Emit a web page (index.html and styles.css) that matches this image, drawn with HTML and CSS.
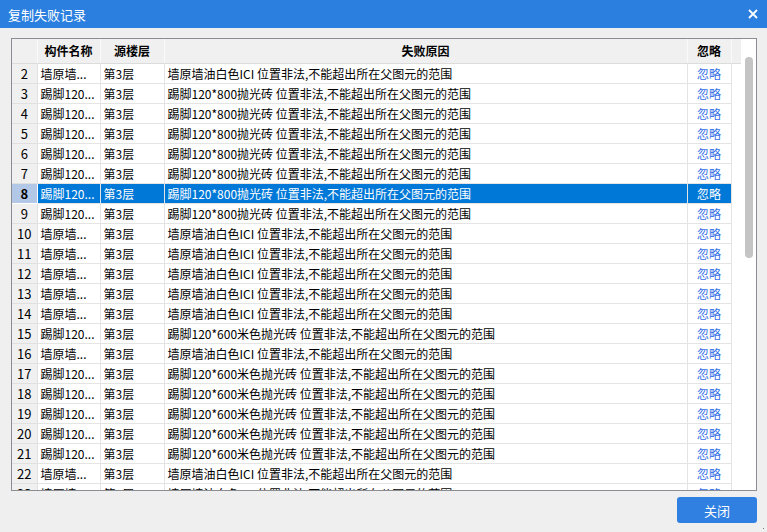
FILE: index.html
```html
<!DOCTYPE html>
<html lang="zh-CN">
<head>
    <meta charset="UTF-8">
    <title>复制失败记录</title>
    <link rel="stylesheet" href="styles.css">
</head>
<body>
    <div class="dialog">
        <div class="titlebar">
            <span class="title">复制失败记录</span>
            <svg class="close-x" width="10" height="10" viewBox="0 0 10 10">
                <path d="M1 1 L9 9 M9 1 L1 9" stroke="#fff" stroke-width="1.8" fill="none"/>
            </svg>
        </div>

        <div class="content">
            <div class="grid-frame">
                <div class="grid-scroll">
                    <table class="grid">
                        <colgroup>
                            <col class="c-num">
                            <col class="c-name">
                            <col class="c-floor">
                            <col class="c-reason">
                            <col class="c-ignore">
                            <col class="c-fill">
                        </colgroup>
                        <thead>
                            <tr>
                                <th></th>
                                <th>构件名称</th>
                                <th>源楼层</th>
                                <th>失败原因</th>
                                <th>忽略</th>
                                <th></th>
                            </tr>
                        </thead>
                        <tbody id="rows"></tbody>
                    </table>
                </div>
                <div class="vscroll">
                    <div class="thumb"></div>
                </div>
            </div>

            <div class="footer">
                <button class="btn-close">关闭</button>
            </div>
        </div>
        <div class="grip"></div>
    </div>

    <script>
        const WALL = ['墙原墙...', '墙原墙油白色ICI 位置非法,不能超出所在父图元的范围'];
        const SKIRT8 = ['踢脚120...', '踢脚120*800抛光砖 位置非法,不能超出所在父图元的范围'];
        const SKIRT6 = ['踢脚120...', '踢脚120*600米色抛光砖 位置非法,不能超出所在父图元的范围'];

        const data = [
            WALL, SKIRT8, SKIRT8, SKIRT8, SKIRT8, SKIRT8, SKIRT8, SKIRT8,
            WALL, WALL, WALL, WALL, WALL,
            SKIRT6, WALL, SKIRT6, SKIRT6, SKIRT6, SKIRT6, SKIRT6,
            WALL, WALL
        ];

        const tbody = document.getElementById('rows');
        data.forEach((item, i) => {
            const num = i + 2;
            const tr = document.createElement('tr');
            if (num === 8) tr.className = 'selected';
            tr.innerHTML =
                '<td class="num">' + num + '</td>' +
                '<td>' + item[0] + '</td>' +
                '<td>第3层</td>' +
                '<td>' + item[1] + '</td>' +
                '<td class="ignore"><a>忽略</a></td>' +
                '<td class="fill"></td>';
            tbody.appendChild(tr);
        });
    </script>
</body>
</html>
```

FILE: styles.css
```css
* {
    margin: 0;
    padding: 0;
    box-sizing: border-box;
}

body {
    font-family: "Noto Sans CJK SC", "Liberation Sans", sans-serif;
    font-size: 12px;
    color: #000;
    background: #efefef;
    width: 767px;
    height: 532px;
    overflow: hidden;
}

.dialog {
    position: relative;
    width: 767px;
    height: 532px;
    background: #efefef;
}

.titlebar {
    height: 28px;
    background: #2b7fdf;
    color: #fff;
    display: flex;
    align-items: center;
    justify-content: space-between;
    padding: 0 9px 0 8px;
}

.title {
    font-size: 13px;
}

.content {
    padding: 10px 10px 0 11px;
}

.grid-frame {
    display: flex;
    width: 746px;
    height: 453px;
    border: 1px solid #8a8d92;
    background: #fff;
    overflow: hidden;
}

.grid-scroll {
    width: 729px;
    overflow: hidden;
}

.grid {
    table-layout: fixed;
    border-collapse: collapse;
    width: 729px;
}

.c-num { width: 25px; }
.c-name { width: 63px; }
.c-floor { width: 64px; }
.c-reason { width: 523px; }
.c-ignore { width: 44px; }
.c-fill { width: 10px; }

.grid th {
    height: 24px;
    background: #f0f0f0;
    font-weight: bold;
    text-align: center;
    border-right: 1px solid #fafafa;
    border-bottom: 1px solid #dcdcdc;
    padding: 0;
}

.grid td {
    height: 20px;
    padding: 0 3px 0 3px;
    white-space: nowrap;
    overflow: hidden;
    border-right: 1px solid #e4e4e4;
    border-bottom: 1px solid #e4e4e4;
    line-height: 19px;
}

.grid td.num {
    background: #f0f0f0;
    text-align: center;
    padding: 0;
    font-size: 13px;
    border-color: #e0e0e0;
}

.grid td.ignore {
    text-align: center;
    padding: 0;
}

.grid td.ignore a {
    color: #3570e6;
}

.grid td.fill {
    border: none;
    background: #fff;
}

.grid tr.selected td {
    background: #0078d7;
    color: #fff;
}

.grid tr.selected td.num {
    background: #b3c7e6;
    color: #000;
    font-weight: bold;
    border-color: #fff;
}

.grid tr.selected td.ignore a {
    color: #fff;
}

.grid tr.selected td.fill {
    background: #fff;
}

.vscroll {
    width: 15px;
    padding: 18px 0 0 4px;
}

.thumb {
    width: 8px;
    height: 201px;
    background: #c4c4c4;
    border-radius: 4px;
}

.footer {
    display: flex;
    justify-content: flex-end;
    padding-top: 6px;
}

.btn-close {
    width: 80px;
    height: 26px;
    border: none;
    border-radius: 3px;
    background: #2f80e0;
    color: #fff;
    font-family: inherit;
    font-size: 13px;
}

.grip {
    position: absolute;
    right: 1px;
    bottom: 1px;
    width: 7px;
    height: 7px;
    background-image: radial-gradient(circle, #7a7a7a 0.8px, transparent 1px);
    background-size: 3px 3px;
    clip-path: polygon(100% 0, 100% 100%, 0 100%);
}
```
